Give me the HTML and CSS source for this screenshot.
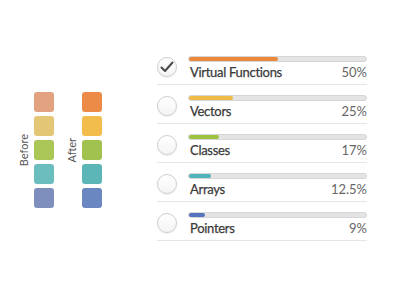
FILE: index.html
```html
<!DOCTYPE html>
<html lang="en">
<head>
    <meta charset="UTF-8">
    <title>Poll Results</title>
    <link rel="stylesheet" href="styles.css">
</head>
<body>
    <div class="page">
        <!-- Colour comparison -->
        <div class="compare">
            <div class="set">
                <span class="set-label">Before</span>
                <div class="swatches">
                    <span class="swatch b1"></span>
                    <span class="swatch b2"></span>
                    <span class="swatch b3"></span>
                    <span class="swatch b4"></span>
                    <span class="swatch b5"></span>
                </div>
            </div>
            <div class="set">
                <span class="set-label">After</span>
                <div class="swatches">
                    <span class="swatch a1"></span>
                    <span class="swatch a2"></span>
                    <span class="swatch a3"></span>
                    <span class="swatch a4"></span>
                    <span class="swatch a5"></span>
                </div>
            </div>
        </div>

        <!-- Poll list -->
        <ul class="poll">
            <li class="row">
                <span class="radio checked">
                    <svg width="14" height="12" viewBox="0 0 14 12"><path d="M1.5 6.5 L5 10 L12.5 1.5" fill="none" stroke="#4a4a4a" stroke-width="2" stroke-linecap="round" stroke-linejoin="round"/></svg>
                </span>
                <div class="info">
                    <div class="track"><div class="fill orange" style="width: 50%"></div></div>
                    <div class="line"><span class="name">Virtual Functions</span><span class="pct">50%</span></div>
                </div>
            </li>
            <li class="row">
                <span class="radio"></span>
                <div class="info">
                    <div class="track"><div class="fill yellow" style="width: 25%"></div></div>
                    <div class="line"><span class="name">Vectors</span><span class="pct">25%</span></div>
                </div>
            </li>
            <li class="row">
                <span class="radio"></span>
                <div class="info">
                    <div class="track"><div class="fill green" style="width: 17%"></div></div>
                    <div class="line"><span class="name">Classes</span><span class="pct">17%</span></div>
                </div>
            </li>
            <li class="row">
                <span class="radio"></span>
                <div class="info">
                    <div class="track"><div class="fill teal" style="width: 12.5%"></div></div>
                    <div class="line"><span class="name">Arrays</span><span class="pct">12.5%</span></div>
                </div>
            </li>
            <li class="row">
                <span class="radio"></span>
                <div class="info">
                    <div class="track"><div class="fill blue" style="width: 9%"></div></div>
                    <div class="line"><span class="name">Pointers</span><span class="pct">9%</span></div>
                </div>
            </li>
        </ul>
    </div>
</body>
</html>
```

FILE: styles.css
```css
body {
    margin: 0;
    background: #ffffff;
    font-family: Lato, "Open Sans", sans-serif;
    color: #444444;
}

.page {
    display: flex;
    align-items: flex-start;
    padding-left: 18px;
}

.compare {
    display: flex;
    gap: 12px;
    margin-top: 92px;
}

.set {
    display: flex;
    align-items: center;
    gap: 4px;
}

.set-label {
    writing-mode: vertical-rl;
    transform: rotate(180deg);
    font-size: 11px;
    line-height: 12px;
    color: #555555;
}

.swatches {
    display: flex;
    flex-direction: column;
    gap: 4px;
}

.swatch {
    display: block;
    width: 20px;
    height: 20px;
    border-radius: 3px;
}

.b1 { background: #e2a27f; }
.b2 { background: #e3c777; }
.b3 { background: #a9c656; }
.b4 { background: #6cbdbe; }
.b5 { background: #7f8fbd; }

.a1 { background: #eb8b47; }
.a2 { background: #f3bd4e; }
.a3 { background: #a1c24f; }
.a4 { background: #5cb5b7; }
.a5 { background: #6b87c2; }

.poll {
    list-style: none;
    margin: 46px 0 0 55px;
    padding: 0;
    width: 210px;
}

.row {
    display: flex;
    align-items: flex-start;
    gap: 11px;
    height: 39px;
    padding-top: 11px;
    box-sizing: border-box;
    border-bottom: 1px solid #e6e6e6;
}

.radio {
    flex: none;
    width: 18px;
    height: 18px;
    border: 1px solid #cfcfcf;
    border-radius: 50%;
    background: linear-gradient(#ffffff, #f4f4f4);
    box-shadow: 0 1px 1px rgba(0, 0, 0, 0.08);
    display: flex;
    align-items: center;
    justify-content: center;
}

.info {
    flex: 1;
}

.track {
    height: 4px;
    background: #e4e4e4;
    border: 1px solid #d6d6d6;
    border-radius: 3px;
    margin-top: -1px;
}

.fill {
    height: 100%;
    border-radius: 3px;
}

.orange { background: #e9873a; }
.yellow { background: #efbb46; }
.green { background: #9dc23e; }
.teal { background: #4fb3b8; }
.blue { background: #5674bd; }

.line {
    display: flex;
    justify-content: space-between;
    margin-top: 2px;
    font-size: 13px;
    line-height: 16px;
}

.name {
    color: #3a3a3a;
    padding-left: 2px;
    letter-spacing: -0.3px;
    -webkit-text-stroke: 0.25px #3a3a3a;
}

.pct {
    color: #666666;
}
```
